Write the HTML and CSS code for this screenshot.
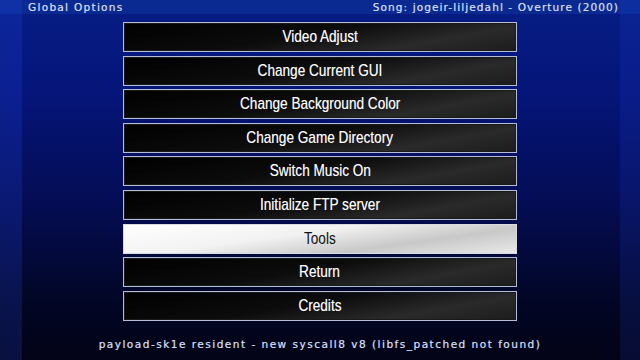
FILE: index.html
```html
<!DOCTYPE html>
<html lang="en">
<head>
    <meta charset="UTF-8">
    <title>Global Options</title>
    <link rel="stylesheet" href="styles.css">
</head>
<body>

<div class="screen">
    <div class="header">
        <span class="title">Global Options</span>
        <span class="song">Song: jogeir-liljedahl - Overture (2000)</span>
    </div>

    <div class="menu">
        <button class="item"><span>Video Adjust</span></button>
        <button class="item"><span>Change Current GUI</span></button>
        <button class="item"><span>Change Background Color</span></button>
        <button class="item"><span>Change Game Directory</span></button>
        <button class="item"><span>Switch Music On</span></button>
        <button class="item"><span>Initialize FTP server</span></button>
        <button class="item selected"><span>Tools</span></button>
        <button class="item"><span>Return</span></button>
        <button class="item"><span>Credits</span></button>
    </div>

    <div class="status">payload-sk1e resident - new syscall8 v8 (libfs_patched not found)</div>
</div>

</body>
</html>
```

FILE: styles.css
```css
body {
    margin: 0;
    background-color: #020316;
    font-family: "DejaVu Sans", sans-serif;
}

.screen {
    width: 640px;
    height: 360px;
    display: flex;
    flex-direction: column;
    background:
        linear-gradient(to right, rgba(40, 80, 255, 0.18) 0, rgba(40, 80, 255, 0.18) 22px, transparent 22px, transparent 620px, rgba(40, 80, 255, 0.12) 620px),
        linear-gradient(to bottom, #0a2a92 0, #0a2a92 14px, #061c82 14px, #05157a 90px, #040d55 200px, #020626 300px, #020316 360px);
}

.header {
    height: 14px;
    display: flex;
    justify-content: space-between;
    align-items: center;
    padding: 0 21px 0 28px;
    color: #d8e0ff;
    font-size: 10.5px;
    letter-spacing: 1.1px;
    text-shadow: -0.5px 0 rgba(255, 120, 220, 0.3), 0.5px 0 rgba(120, 255, 200, 0.3);
}

.title {
    letter-spacing: 1.3px;
}

.menu {
    margin: 8px 0 0 123px;
    width: 394px;
    display: flex;
    flex-direction: column;
    gap: 3.6px;
}

.item {
    height: 30px;
    padding: 0;
    border: 1.5px solid #b4bcd6;
    box-shadow: inset 0 0 0 1px #1a1a1a;
    background: linear-gradient(170deg, #000 0%, #0c0c0c 45%, #2a2a2a 75%, #1c1c1c 100%);
    color: #fff;
    font-family: "Liberation Sans", sans-serif;
    font-size: 17px;
    display: flex;
    justify-content: center;
    align-items: center;
    text-shadow: -0.4px 0 rgba(255, 120, 220, 0.3), 0.4px 0 rgba(120, 255, 200, 0.3);
}

.item span {
    display: inline-block;
    transform: scaleX(0.8);
    white-space: nowrap;
}

.item.selected {
    border-color: #d8dae0;
    box-shadow: none;
    background: linear-gradient(172deg, #ffffff 0%, #f2f2f2 40%, #c8c8c8 70%, #e8e8e8 100%);
    color: #111;
    text-shadow: none;
}

.status {
    margin-top: 17px;
    text-align: center;
    color: #d8e0ff;
    font-size: 10.5px;
    letter-spacing: 1.5px;
    text-shadow: -0.5px 0 rgba(255, 120, 220, 0.3), 0.5px 0 rgba(120, 255, 200, 0.3);
}
```
